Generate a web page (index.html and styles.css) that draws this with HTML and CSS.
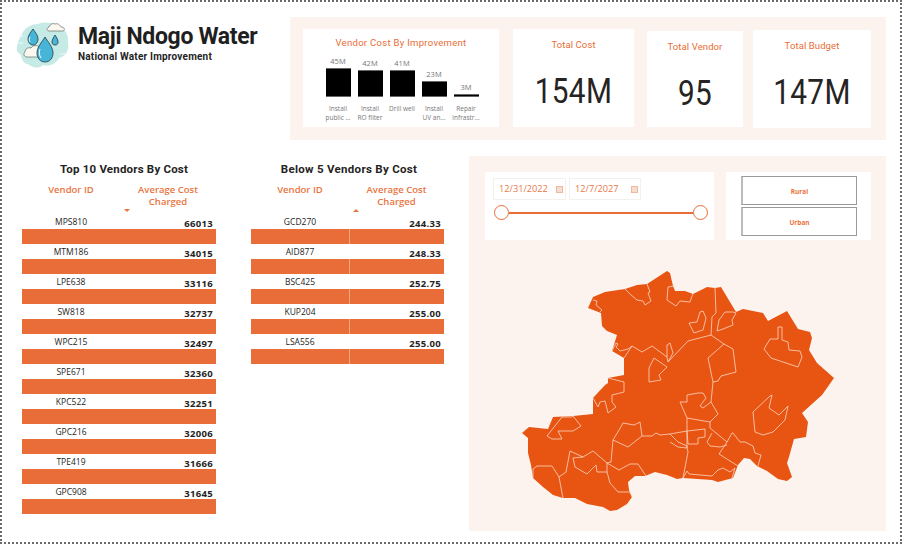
FILE: index.html
```html
<!DOCTYPE html>
<html lang="en">
<head>
<meta charset="utf-8">
<title>Maji Ndogo Water</title>
<link rel="stylesheet" href="styles.css">
</head>
<body>
<main class="page">
  <section class="top">
    <header class="brand">
      <svg class="logo" viewBox="0 0 54 48" width="54" height="48" aria-hidden="true">
        <path class="blob" d="M5 14c2-7 9-12 17-12 5-2 14-2 18 1 8 2 13 9 12 17 2 8-3 15-9 16-3 6-10 9-16 7-4 4-11 3-15-1-4 0-7-5-7-9-3-2-5-4-4-8 0-4 2-8 4-11z"/>
        <path class="cloud" d="M33 9c-2 0-3-3 0-4 1-3 4-4 6-3 3-1 5 1 6 3 3 0 4 2 3 3 0 1-1 1-2 1z"/>
        <path class="cloud" d="M11 35c-3 0-4-3-2-5 0-3 3-5 6-4 2-3 6-3 8-1l2 10z"/>
        <path class="drop" d="M29 15c3 5 8 10 8 16 0 5-3 9-8 9s-8-4-8-9c0-6 5-11 8-16z"/>
        <path class="drop" d="M17 7c2 3 5 6 5 10 0 3-2 6-5 6s-5-3-5-6c0-4 3-7 5-10z"/>
        <path class="drop" d="M39 13c1 2 3 4 3 7 0 2-1 3-3 3s-3-1-3-3c0-3 2-5 3-7z"/>
        <path class="shine" d="M24 27c-1 3-1 6 1 9M14 15c-1 2-1 3 0 5"/>
        <path class="wisp" d="M1 21h6M44 32h7M3 14h4"/>
      </svg>
      <div class="brand-text">
        <h1>Maji Ndogo Water</h1>
        <p>National Water Improvement</p>
      </div>
    </header>
    <div class="kpi-panel">
      <article class="card chart-card">
        <h2 class="card-title chart-title">Vendor Cost By Improvement</h2>
        <div class="bars">
          <div class="bar-col"><span class="bar-val">45M</span><i class="bar h45"></i></div>
          <div class="bar-col"><span class="bar-val">42M</span><i class="bar h42"></i></div>
          <div class="bar-col"><span class="bar-val">41M</span><i class="bar h41"></i></div>
          <div class="bar-col"><span class="bar-val">23M</span><i class="bar h23"></i></div>
          <div class="bar-col"><span class="bar-val">3M</span><i class="bar h3"></i></div>
        </div>
        <div class="cats">
          <span>Install<br>public ...</span>
          <span>Install<br>RO filter</span>
          <span>Drill well</span>
          <span>Install<br>UV an...</span>
          <span>Repair<br>infrastr...</span>
        </div>
      </article>
      <article class="card kpi kpi-cost"><h2 class="card-title">Total Cost</h2><div class="kpi-num">154M</div></article>
      <article class="card kpi kpi-vendor"><h2 class="card-title">Total Vendor</h2><div class="kpi-num">95</div></article>
      <article class="card kpi kpi-budget"><h2 class="card-title">Total Budget</h2><div class="kpi-num">147M</div></article>
    </div>
  </section>

  <section class="bottom">
    <div class="vendors vendors-top">
      <h2 class="table-title">Top 10 Vendors By Cost</h2>
      <div class="thead">
        <div class="th">Vendor ID</div>
        <div class="th">Average Cost<br>Charged</div>
      </div>
      <div class="sort"><i class="tri down"></i></div>
      <div class="row"><span>MPS810</span><b>66013</b></div><div class="band"></div>
      <div class="row"><span>MTM186</span><b>34015</b></div><div class="band"></div>
      <div class="row"><span>LPE638</span><b>33116</b></div><div class="band"></div>
      <div class="row"><span>SW818</span><b>32737</b></div><div class="band"></div>
      <div class="row"><span>WPC215</span><b>32497</b></div><div class="band"></div>
      <div class="row"><span>SPE671</span><b>32360</b></div><div class="band"></div>
      <div class="row"><span>KPC522</span><b>32251</b></div><div class="band"></div>
      <div class="row"><span>GPC216</span><b>32006</b></div><div class="band"></div>
      <div class="row"><span>TPE419</span><b>31666</b></div><div class="band"></div>
      <div class="row"><span>GPC908</span><b>31645</b></div><div class="band"></div>
    </div>

    <div class="vendors vendors-low">
      <h2 class="table-title">Below 5 Vendors By Cost</h2>
      <div class="thead">
        <div class="th">Vendor ID</div>
        <div class="th">Average Cost<br>Charged</div>
      </div>
      <div class="sort"><i class="tri up"></i></div>
      <div class="row"><span>GCD270</span><b>244.33</b></div><div class="band split"></div>
      <div class="row"><span>AID877</span><b>248.33</b></div><div class="band split"></div>
      <div class="row"><span>BSC425</span><b>252.75</b></div><div class="band split"></div>
      <div class="row"><span>KUP204</span><b>255.00</b></div><div class="band split"></div>
      <div class="row"><span>LSA556</span><b>255.00</b></div><div class="band split"></div>
    </div>

    <div class="map-panel">
      <div class="filters">
        <div class="date-card">
          <div class="dates">
            <div class="date"><span>12/31/2022</span><i class="cal"></i></div>
            <div class="date"><span>12/7/2027</span><i class="cal"></i></div>
          </div>
          <div class="slider"><i class="knob"></i><i class="track"></i><i class="knob"></i></div>
        </div>
        <div class="btn-card">
          <div class="seg">Rural</div>
          <div class="seg">Urban</div>
        </div>
      </div>
      <svg class="map" viewBox="469 240 417 291" width="417" height="291" aria-hidden="true">
        <path class="land" d="M588 308L593 297L605 292L625 289L637 285L647 284L667 271L670 273L673 286L675 291L685 291L693 294L707 287L715 288L721 287L736 312L743 309L763 313L768 321L787 311L798 329L810 332L812 338L809 350L817 363L834 378L822 395L802 413L808 422L806 437L794 439L789 457L787 463L792 477L787 481L778 479L767 471L757 466L750 459L744 458L738 465L733 478L718 482L712 480L683 478L677 479L667 475L655 472L645 476L635 476L628 482L629 490L632 497L627 504L617 510L610 511L603 507L587 504L575 498L563 498L553 495L543 487L533 478L531 465L528 453L528 438L522 433L529 427L548 429L553 417L573 416L593 414L593 398L605 385L608 383L608 378L624 375L624 358L612 351L617 335L607 331L602 326L601 313Z"/>
        <g class="lines">
          <path d="M625 289L630 294L637 300L643 301L645 305L651 301L648 293L650 292L647 284"/>
          <path d="M674 286L668 287L667 300L676 306L680 301L690 302L692 296L693 294"/>
          <path d="M593 300L597 301L596 305L602 310L600 312"/>
          <path d="M612 351L616 343L618 344L616 347L620 351L628 349L632 346L642 352L652 346L667 357L668 362L688 341L711 335L724 344L733 349L736 372L721 376L718 381L713 382L708 358L724 344"/>
          <path d="M667 357L667 345L670 343L673 353L668 362"/>
          <path d="M624 358L632 346"/>
          <path d="M711 335L712 317L716 313L715 288"/>
          <path d="M654 358L667 367L659 375L661 380L649 382L649 368Z"/>
          <path d="M689 323L697 322L700 312L703 311L706 318L703 330L694 333Z"/>
          <path d="M725 312L733 312L736 313L732 320L733 325L723 329L717 331L719 320Z"/>
          <path d="M778 327L782 327L782 340L788 342L789 350L800 351L802 357L798 367L771 358L764 349L770 339L778 339Z"/>
          <path d="M713 382L711 402"/>
          <path d="M680 402L687 402L687 395L698 393L703 393L706 398L700 406L703 408L711 402L718 414L710 422L687 418Z"/>
          <path d="M710 422L710 428L727 442L732 433L733 433L740 442L745 442L753 446L755 453L761 455L758 466"/>
          <path d="M727 442L719 454L738 466"/>
          <path d="M712 433L707 442L710 446L720 447L727 445"/>
          <path d="M687 418L687 448L688 452L683 478"/>
          <path d="M670 434L687 431L705 429L705 437L698 438L698 444L688 444L687 431"/>
          <path d="M670 434L678 442L687 446L687 448L678 447L670 442"/>
          <path d="M683 478L687 471L689 474L712 476L718 470L723 468L730 472L735 468L732 478"/>
          <path d="M562 417L572 417L573 416L581 426L573 431L558 431L562 439L552 439L547 436Z"/>
          <path d="M593 398L598 407L600 402L605 401L608 413L616 407L612 402L612 395L624 392L624 382L608 378"/>
          <path d="M623 423L634 425L640 422L642 436L628 447L613 440L622 425Z"/>
          <path d="M642 436L652 436L656 433L660 435L670 434"/>
          <path d="M613 440L611 462L607 463L593 451L583 457L570 451L566 472L559 477L563 498"/>
          <path d="M559 477L552 466L537 466L533 469L533 478"/>
          <path d="M583 457L573 458L575 467L587 474L596 465L597 472L607 472L607 463"/>
          <path d="M607 472L610 483L618 492L630 492L632 497"/>
          <path d="M607 463L619 470L630 464L638 464L646 476"/>
          <path d="M753 412L770 396L772 395L769 408L779 415L788 406L785 420L773 432L763 435L755 432Z"/>
        </g>
      </svg>
    </div>
  </section>
</main>
</body>
</html>
```

FILE: styles.css
```css
* { box-sizing: border-box; }
html, body { margin: 0; padding: 0; background: #fff; }
body { font-family: "Open Sans", "Liberation Sans", sans-serif; color: #252423; overflow: hidden; }
h1, h2, p { margin: 0; }
i { display: block; }

.page {
  width: 902px;
  height: 544px;
  border: 2px dotted #6b6b6b;
  padding-top: 15px;
  display: flex;
  flex-direction: column;
  gap: 16px;
}

/* top band */
.top { display: flex; height: 123px; }
.brand { width: 288px; padding: 5px 0 0 14px; display: flex; align-items: flex-start; gap: 8px; }
.logo { flex: none; }
.blob { fill: #c6ebe6; }
.cloud { fill: #fbf8f0; stroke: #555; stroke-width: .6; }
.drop { fill: #46b5d8; stroke: #2f4a55; stroke-width: .9; }
.shine { fill: none; stroke: #fff; stroke-width: 1; }
.wisp { fill: none; stroke: #eefaf8; stroke-width: 1; }
.brand-text { padding-top: 1px; }
h1 { font: 700 23px/28px Roboto, sans-serif; letter-spacing: -.35px; color: #1f1f1f; white-space: nowrap; }
.brand-text p { font: 700 10px/13px Roboto, sans-serif; letter-spacing: .2px; color: #1f1f1f; white-space: nowrap; margin-top: -1px; }

.kpi-panel { width: 596px; background: #fdf3ee; padding: 12px 15px 13px 13px; display: flex; align-items: flex-start; }
.card { background: #fff; height: 98px; text-align: center; }
.card-title { font: 400 9.5px/14px Roboto, sans-serif; letter-spacing: .1px; color: #e96c36; }
.chart-card { width: 196px; }
.chart-title { padding-top: 7px; letter-spacing: .3px; }
.kpi { padding-top: 9px; }
.kpi-cost { width: 121px; margin-left: 14px; }
.kpi-vendor { width: 96px; height: 96px; margin: 2px 0 0 13px; }
.kpi-budget { width: 118px; margin: 1px 0 0 10px; }
.kpi-num { font: 400 35px/40px Roboto, sans-serif; letter-spacing: .4px; color: #252423; margin-top: 20px; transform: scaleX(.85); }

.bars { display: flex; align-items: flex-end; height: 47px; padding-left: 19px; }
.bar-col { width: 32px; display: flex; flex-direction: column; align-items: center; }
.bar-val { font: 400 7.5px/10px "Open Sans", sans-serif; color: #777; margin-bottom: 2px; }
.bar { width: 25px; background: #000; border-top: 1px solid #666; border-bottom: 1px solid #666; }
.h45 { height: 29px; }
.h42 { height: 27px; }
.h41 { height: 27px; }
.h23 { height: 16px; }
.h3 { height: 3px; }
.cats { display: flex; padding: 7px 0 0 19px; }
.cats span { width: 32px; font: 400 6.5px/9px "Open Sans", sans-serif; color: #777; white-space: nowrap; }

/* bottom band */
.bottom { display: flex; align-items: flex-start; }
.vendors { padding-top: 6px; }
.vendors-top { width: 194px; margin-left: 20px; }
.vendors-low { width: 193px; margin-left: 35px; }
.table-title { font: 700 11.5px/14px Roboto, sans-serif; letter-spacing: .2px; color: #252423; text-align: center; }
.vendors-top .table-title { padding-left: 10px; }
.vendors-low .table-title { padding-left: 3px; letter-spacing: .3px; }
.thead { display: grid; grid-template-columns: 98px 1fr; margin-top: 8px; }
.th { font: 600 9.5px/12px "Open Sans", sans-serif; color: #ea7440; text-align: center; }
.sort { height: 6px; padding-left: 102px; padding-top: 1px; }
.tri { width: 0; height: 0; border-left: 3.5px solid transparent; border-right: 3.5px solid transparent; }
.tri.down { border-top: 3.5px solid #ea7440; }
.tri.up { border-bottom: 3.5px solid #ea7440; }
.row { display: grid; grid-template-columns: 98px 1fr; height: 15px; }
.row span { font: 400 8.5px/15px "Open Sans", sans-serif; text-align: center; color: #252423; }
.row b { font: 700 9.5px/20px "Open Sans", sans-serif; letter-spacing: .3px; text-align: right; padding-right: 3px; color: #252423; }
.band { height: 15px; background: #e86d38; }
.band.split { background: linear-gradient(to right, #e86d38 98px, #f5a982 98px, #f5a982 99px, #e86d38 99px); }

/* map panel */
.map-panel { width: 417px; height: 375px; margin-left: 25px; background: #fdf3ee; padding-top: 16px; }
.filters { display: flex; gap: 12px; padding-left: 16px; height: 68px; }
.date-card { width: 229px; background: #fff; padding: 6px 8px 0; }
.dates { display: flex; gap: 3px; }
.date { width: 73px; height: 22px; border: 1px solid #f3f0ee; display: flex; align-items: center; justify-content: space-between; padding: 0 2px 0 5px; }
.date span { font: 400 9.2px/12px "Open Sans", sans-serif; color: #e9784a; white-space: nowrap; }
.date:last-child { width: 72px; }
.cal { width: 7px; height: 7px; background: #f6ddd2; border: 1px solid #f0b89f; }
.slider { display: flex; align-items: center; margin: 5px 0 0 1px; width: 214px; }
.knob { width: 15px; height: 15px; flex: none; border-radius: 50%; background: #fff; border: 1.5px solid #e86d38; }
.track { flex: 1; height: 2px; background: #e86d38; }
.btn-card { width: 145px; background: #fff; padding: 4px 14px 0 15px; display: flex; flex-direction: column; gap: 2px; }
.seg { height: 29px; border: 1px solid #999; border-left: 2px solid #bbb; font: 700 6.5px/30px "Open Sans", sans-serif; color: #ea7440; text-align: center; }

.map { display: block; }
.land { fill: #e85513; }
.lines path { fill: none; stroke: #fbd6c2; stroke-width: .8; stroke-linejoin: round; }
```
